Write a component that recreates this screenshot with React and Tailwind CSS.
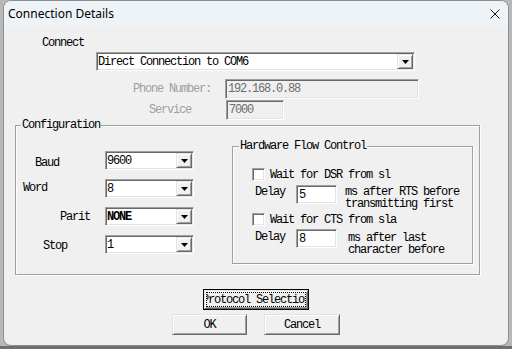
import React from "react";

const mono = "font-['Liberation_Mono',monospace] text-[12px] tracking-[-1.2px] leading-[12px]";
const sunken = "border border-t-[#a0a0a0] border-l-[#a0a0a0] border-b-white border-r-white shadow-[inset_1px_1px_0_#696969,inset_-1px_-1px_0_#e3e3e3]";
const raised = "border border-t-[#e3e3e3] border-l-[#e3e3e3] border-b-[#696969] border-r-[#696969] shadow-[inset_1px_1px_0_#ffffff,inset_-1px_-1px_0_#a0a0a0]";

function Arrow() {
  return (
    <svg width="7" height="4" viewBox="0 0 7 4">
      <path d="M0 0H7L3.5 4Z" fill="#000" />
    </svg>
  );
}

function Combo({ className, text }) {
  return (
    <div className={`flex items-stretch bg-white ${sunken} ${className}`}>
      <div className={`${mono} flex-1 flex items-center pl-[1px] whitespace-nowrap overflow-hidden`}>{text}</div>
      <div className={`w-[16px] my-[1px] mr-[1px] bg-[#f0f0f0] flex items-center justify-center ${raised}`}>
        <Arrow />
      </div>
    </div>
  );
}

function Check() {
  return <div className={`w-[13px] h-[13px] bg-white ${sunken}`} />;
}

function Button({ className, children }) {
  return (
    <div className={`flex items-center justify-center bg-[#f0f0f0] ${raised} ${className}`}>
      <span className={mono}>{children}</span>
    </div>
  );
}

export default function App() {
  return (
    <div className="w-[512px] h-[349px] bg-[#b8b8b8] flex flex-col overflow-hidden text-black">
      <div className="ml-[3px] w-[506px] h-[346px] shrink-0 rounded-lg border border-[#8e8e8e] bg-[#f0f0f0] overflow-hidden flex flex-col">
        {/* Title bar */}
        <div className="h-[25px] shrink-0 bg-[#eef3f8] flex items-center justify-between pl-[4px] pr-[8px]">
          <span className="font-['Noto_Sans',sans-serif] text-[12px] leading-[14px] text-black">Connection Details</span>
          <svg width="10" height="10" viewBox="0 0 10 10">
            <path d="M0.5 0.5L9.5 9.5M9.5 0.5L0.5 9.5" stroke="#1c1c1c" strokeWidth="1" />
          </svg>
        </div>

        {/* Body */}
        <div className="flex flex-col items-start">
          <div className={`${mono} mt-[11px] ml-[38px]`}>Connect</div>
          <Combo className="mt-[3px] ml-[92px] w-[319px] h-[19px]" text="Direct Connection to COM6" />

          <div className="mt-[8px] ml-[129px] flex items-center">
            <span className={`${mono} w-[82px] text-[#a0a0a0]`}>Phone Number:</span>
            <div className={`ml-[10px] w-[194px] h-[20px] bg-[#f0f0f0] ${sunken} flex items-center pl-[2px]`}>
              <span className={`${mono} text-[#6d6d6d]`}>192.168.0.88</span>
            </div>
          </div>

          <div className="mt-[1px] ml-[145px] flex items-center">
            <span className={`${mono} w-[42px] text-[#a0a0a0]`}>Service</span>
            <div className={`ml-[35px] w-[58px] h-[20px] bg-[#f0f0f0] ${sunken} flex items-center pl-[2px]`}>
              <span className={`${mono} text-[#6d6d6d]`}>7000</span>
            </div>
          </div>

          {/* Configuration group */}
          <div className="relative mt-[5px] ml-[11px] w-[465px] h-[150px] border border-[#a0a0a0] shadow-[inset_1px_1px_0_#ffffff,1px_1px_0_#ffffff] flex items-start">
            <span className={`${mono} absolute -top-[7px] left-[5px] px-[1px] bg-[#f0f0f0]`}>Configuration</span>

            <div className="w-[216px] shrink-0 flex flex-col pt-[25px]">
              <div className="flex items-start">
                <div className="w-[89px] shrink-0">
                  <div className={`${mono} ml-[19px] mt-[6px]`}>Baud</div>
                </div>
                <Combo className="w-[89px] h-[19px]" text="9600" />
              </div>
              <div className="flex items-start mt-[9px]">
                <div className="w-[89px] shrink-0">
                  <div className={`${mono} ml-[7px] mt-[3px]`}>Word</div>
                </div>
                <Combo className="w-[89px] h-[19px]" text="8" />
              </div>
              <div className="flex items-start mt-[9px]">
                <div className="w-[89px] shrink-0">
                  <div className={`${mono} ml-[44px] mt-[4px]`}>Parit</div>
                </div>
                <Combo className="w-[89px] h-[19px]" text={<span className="font-bold">NONE</span>} />
              </div>
              <div className="flex items-start mt-[9px]">
                <div className="w-[89px] shrink-0">
                  <div className={`${mono} ml-[27px] mt-[5px]`}>Stop</div>
                </div>
                <Combo className="w-[89px] h-[19px]" text="1" />
              </div>
            </div>

            {/* Hardware flow control group */}
            <div className="relative mt-[20px] w-[241px] h-[118px] border border-[#a0a0a0] shadow-[inset_1px_1px_0_#ffffff,1px_1px_0_#ffffff] flex flex-col items-start">
              <span className={`${mono} absolute -top-[7px] left-[6px] px-[1px] bg-[#f0f0f0]`}>Hardware Flow Control</span>

              <div className="mt-[21px] ml-[19px] flex items-center">
                <Check />
                <span className={`${mono} ml-[5px]`}>Wait for DSR from sl</span>
              </div>

              <div className="mt-[4px] ml-[22px] flex items-start">
                <span className={`${mono} mt-[1px] w-[30px]`}>Delay</span>
                <div className={`ml-[11px] w-[41px] h-[19px] bg-white ${sunken} flex items-center pl-[2px]`}>
                  <span className={mono}>5</span>
                </div>
                <div className={`${mono} leading-[11px] ml-[8px] mt-[1px] h-[24px] w-[120px] overflow-hidden`}>
                  <div>ms after RTS before</div>
                  <div>transmitting first</div>
                  <div>character</div>
                </div>
              </div>

              <div className="mt-[3px] ml-[19px] flex items-center">
                <Check />
                <span className={`${mono} ml-[5px]`}>Wait for CTS from sla</span>
              </div>

              <div className="mt-[3px] ml-[22px] flex items-start">
                <span className={`${mono} mt-[2px] w-[30px]`}>Delay</span>
                <div className={`ml-[11px] w-[41px] h-[19px] bg-white ${sunken} flex items-center pl-[2px]`}>
                  <span className={mono}>8</span>
                </div>
                <div className={`${mono} leading-[11px] ml-[11px] mt-[3px] h-[24px] w-[110px] overflow-hidden`}>
                  <div>ms after last</div>
                  <div>character before</div>
                  <div>dropping RTS</div>
                </div>
              </div>
            </div>
          </div>

          {/* Protocol selection */}
          <div className="relative mt-[14px] ml-[199px] w-[106px] h-[21px] border border-black bg-[#f0f0f0]">
            <div className={`w-full h-full flex items-center justify-center ${raised}`}>
              <div className="w-[98px] flex justify-center overflow-hidden">
                <span className={`${mono} whitespace-nowrap shrink-0`}>Protocol Selection</span>
              </div>
            </div>
            <div className="absolute left-[2px] right-[2px] top-[2px] bottom-[2px] border border-dotted border-black pointer-events-none" />
          </div>

          <div className="mt-[4px] ml-[168px] flex gap-[17px]">
            <Button className="w-[75px] h-[21px]">OK</Button>
            <Button className="w-[76px] h-[21px]">Cancel</Button>
          </div>
        </div>
      </div>
      <div className="flex-1 bg-[#6e6e6e]" />
    </div>
  );
}
